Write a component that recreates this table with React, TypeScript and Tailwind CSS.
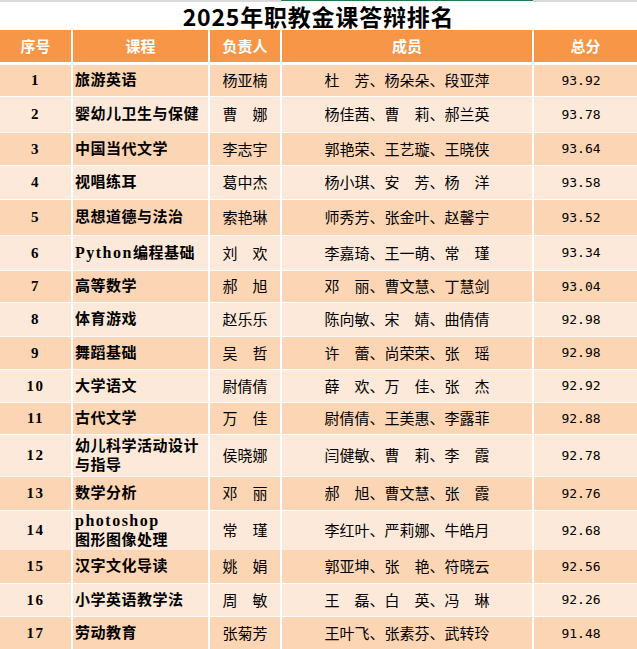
import React from 'react'

interface Row {
  no: number
  course: React.ReactNode
  leader: string
  members: string
  score: string
  h: number
}

const S = '\u3000'

const Latin = ({ children }: { children: React.ReactNode }) => (
  <span className="text-[16px] tracking-[1.5px]">{children}</span>
)

const rows: Row[] = [
  { no: 1, course: '旅游英语', leader: '杨亚楠', members: `杜${S}芳、杨朵朵、段亚萍`, score: '93.92', h: 31 },
  { no: 2, course: '婴幼儿卫生与保健', leader: `曹${S}娜`, members: `杨佳茜、曹${S}莉、郝兰英`, score: '93.78', h: 35 },
  { no: 3, course: '中国当代文学', leader: '李志宇', members: '郭艳荣、王艺璇、王晓侠', score: '93.64', h: 32 },
  { no: 4, course: '视唱练耳', leader: '葛中杰', members: `杨小琪、安${S}芳、杨${S}洋`, score: '93.58', h: 33 },
  { no: 5, course: '思想道德与法治', leader: '索艳琳', members: '师秀芳、张金叶、赵馨宁', score: '93.52', h: 35 },
  {
    no: 6,
    course: (
      <>
        <Latin>Python</Latin>编程基础
      </>
    ),
    leader: `刘${S}欢`,
    members: `李嘉琦、王一萌、常${S}瑾`,
    score: '93.34',
    h: 34
  },
  { no: 7, course: '高等数学', leader: `郝${S}旭`, members: `邓${S}丽、曹文慧、丁慧剑`, score: '93.04', h: 31 },
  { no: 8, course: '体育游戏', leader: '赵乐乐', members: `陈向敏、宋${S}婧、曲倩倩`, score: '92.98', h: 33 },
  { no: 9, course: '舞蹈基础', leader: `吴${S}哲`, members: `许${S}蕾、尚荣荣、张${S}瑶`, score: '92.98', h: 32 },
  { no: 10, course: '大学语文', leader: '尉倩倩', members: `薛${S}欢、万${S}佳、张${S}杰`, score: '92.92', h: 32 },
  { no: 11, course: '古代文学', leader: `万${S}佳`, members: '尉倩倩、王美惠、李露菲', score: '92.88', h: 31 },
  {
    no: 12,
    course: (
      <>
        幼儿科学活动设计
        <br />
        与指导
      </>
    ),
    leader: '侯晓娜',
    members: `闫健敏、曹${S}莉、李${S}霞`,
    score: '92.78',
    h: 41
  },
  { no: 13, course: '数学分析', leader: `邓${S}丽`, members: `郝${S}旭、曹文慧、张${S}霞`, score: '92.76', h: 33 },
  {
    no: 14,
    course: (
      <>
        <Latin>photoshop</Latin>
        <br />
        图形图像处理
      </>
    ),
    leader: `常${S}瑾`,
    members: '李红叶、严莉娜、牛皓月',
    score: '92.68',
    h: 38
  },
  { no: 15, course: '汉字文化导读', leader: `姚${S}娟`, members: `郭亚坤、张${S}艳、符晓云`, score: '92.56', h: 33 },
  { no: 16, course: '小学英语教学法', leader: `周${S}敏`, members: `王${S}磊、白${S}英、冯${S}琳`, score: '92.26', h: 32 },
  { no: 17, course: '劳动教育', leader: '张菊芳', members: '王叶飞、张素芬、武转玲', score: '91.48', h: 33 }
]

const cols = 'grid grid-cols-[71px_135px_70px_250px_1fr] gap-x-[2px]'

export default function App() {
  return (
    <div className="w-[637px] h-[649px] overflow-hidden bg-white font-['Noto_Sans_CJK_SC',sans-serif] text-black">
      {/* top sheet border */}
      <div className="grid grid-cols-[281px_252px_1fr] h-[2px]">
        <div className="bg-[#d9d9d9]" />
        <div className="bg-[#1e7b4c] h-[1px]" />
        <div className="bg-[#d9d9d9]" />
      </div>

      {/* title */}
      <div className="h-[28px] flex items-center justify-center">
        <h1 className="text-[23px] font-bold leading-[28px] tracking-[0.8px] font-['Noto_Sans_CJK_SC',sans-serif]">
          2025年职教金课答辩排名
        </h1>
      </div>

      {/* header */}
      <div className={`${cols} h-[32px] text-[15px] font-bold text-white`}>
        {['序号', '课程', '负责人', '成员', '总分'].map(h => (
          <div key={h} className="bg-[#f79646] flex items-center justify-center">
            {h}
          </div>
        ))}
      </div>

      <div className="mt-[3px] flex flex-col gap-y-[1px]">
        {rows.map(r => {
          const bg = r.no % 2 === 1 ? 'bg-[#fcd5b4]' : 'bg-[#fde9d9]'
          return (
            <div key={r.no} className={cols} style={{ height: r.h }}>
              <div className={`${bg} flex items-center justify-center font-['Liberation_Serif',serif] font-bold text-[15px] tracking-[1.5px]`}>
                {r.no}
              </div>
              <div className={`${bg} flex items-center pl-[2px] font-['Liberation_Serif','Noto_Sans_CJK_SC',serif] font-bold text-[15px] leading-[19px] tracking-[0.5px]`}>
                <span>{r.course}</span>
              </div>
              <div className={`${bg} flex items-center justify-center text-[15px]`}>{r.leader}</div>
              <div className={`${bg} flex items-center justify-center text-[15px]`}>{r.members}</div>
              <div className={`${bg} flex items-center justify-center pr-[9px] font-['DejaVu_Sans_Mono',monospace] text-[13px]`}>
                {r.score}
              </div>
            </div>
          )
        })}
      </div>
    </div>
  )
}
